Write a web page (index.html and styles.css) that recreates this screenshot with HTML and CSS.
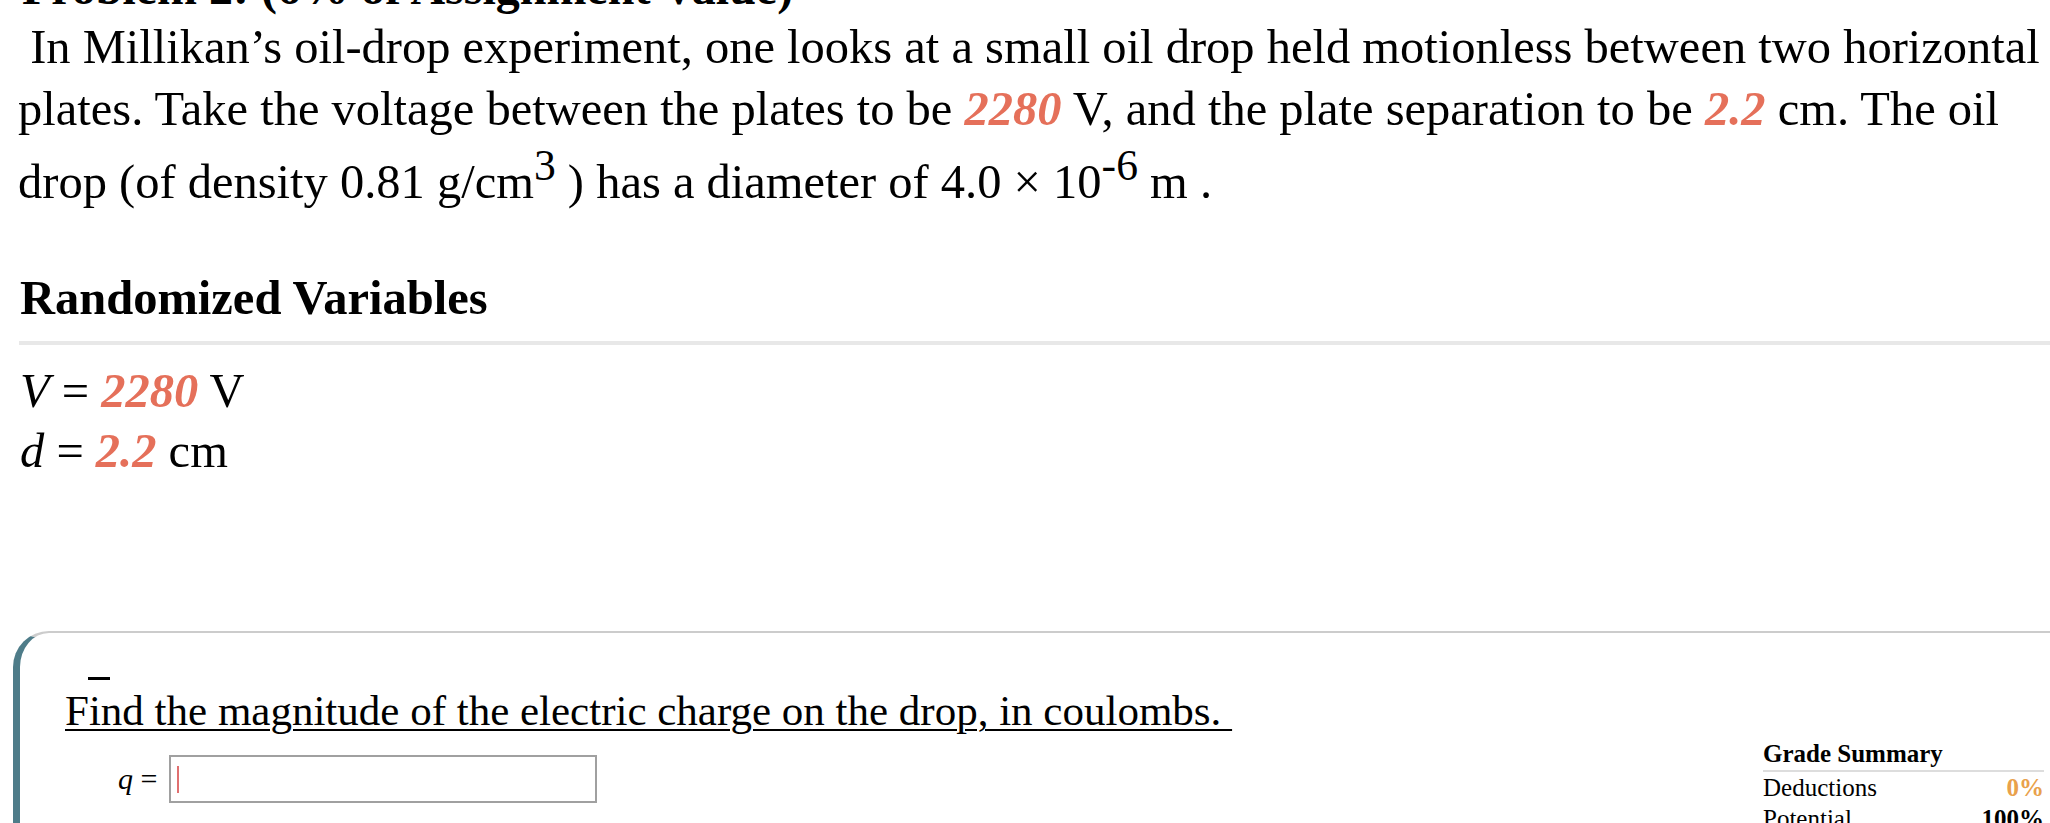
FILE: index.html
```html
<!DOCTYPE html>
<html>
<head>
<meta charset="utf-8">
<link rel="stylesheet" href="styles.css">
</head>
<body>
<div class="page">
  <h1 class="title">Problem 2: (6% of Assignment Value)</h1>
  <p class="statement">&nbsp;In Millikan’s oil-drop experiment, one looks at a small oil drop held motionless between two horizontal plates. Take the voltage between the plates to be <b class="rv">2280</b> V, and the plate separation to be <b class="rv">2.2</b> cm. The oil drop (of density 0.81 g/cm<sup>3</sup> ) has a diameter of 4.0 × 10<sup>-6</sup> m .</p>

  <h2 class="section-title">Randomized Variables</h2>
  <div class="rule"></div>
  <div class="vars">
    <div><i>V</i> = <b class="rv">2280</b> V</div>
    <div><i>d</i> = <b class="rv">2.2</b> cm</div>
  </div>

  <div class="card">
    <div class="dash"></div>
    <div class="question"><span class="qtext">Find the magnitude of the electric charge on the drop, in coulombs.&nbsp;</span></div>
    <div class="answer-row">
      <div class="answer">
        <span class="label"><i>q</i> = </span>
        <div class="input"><span class="caret"></span></div>
      </div>
      <div class="grade">
        <div class="grade-head">Grade Summary</div>
        <div class="grade-row"><span>Deductions</span><b class="ded">0%</b></div>
        <div class="grade-row"><span>Potential</span><b>100%</b></div>
      </div>
    </div>
  </div>
</div>
</body>
</html>
```

FILE: styles.css
```css
html, body {
  margin: 0;
  padding: 0;
  overflow: hidden;
  background: #fff;
}

body {
  font-family: "Liberation Serif", "Times New Roman", serif;
  color: #000;
}

.page {
  padding-left: 18px;
}

.title {
  margin: -40px 0 0 0;
  padding-left: 4px;
  font-size: 48px;
  line-height: 56px;
  font-weight: bold;
  white-space: nowrap;
}

.statement {
  margin: 0;
  font-size: 48.5px;
  line-height: 62px;
}

.statement sup {
  font-size: 0.9em;
  line-height: normal;
  vertical-align: 18px;
}

.rv {
  color: #e5705a;
  font-style: italic;
  font-weight: bold;
}

.section-title {
  margin: 55px 0 0 0;
  padding-left: 2px;
  font-size: 48.5px;
  line-height: 60px;
  font-weight: bold;
}

.rule {
  height: 4px;
  background: #e8e8e8;
  margin: 13px 0 0 1px;
}

.vars {
  margin-top: 16px;
  font-size: 48.5px;
  line-height: 60px;
  padding-left: 2px;
}

.card {
  margin: 150px 0 0 -5px;
  border-left: 7px solid #4e7c89;
  border-top: 2px solid #cccccc;
  border-top-left-radius: 36px;
  padding: 44px 6px 0 45px;
  min-height: 320px;
}

.dash {
  width: 22px;
  height: 3px;
  background: #000;
  margin-left: 23px;
}

.question {
  margin-top: 6px;
  font-size: 43px;
  line-height: 50px;
}

.qtext {
  text-decoration: underline;
  text-decoration-thickness: 2px;
  text-underline-offset: 4px;
}

.answer-row {
  display: flex;
  justify-content: space-between;
  align-items: flex-start;
  margin-top: 4px;
}

.answer {
  display: flex;
  align-items: center;
  margin-top: 15px;
  margin-left: 53px;
}

.label {
  font-size: 30px;
  margin-right: 12px;
}

.input {
  width: 418px;
  height: 44px;
  border: 2px solid #a0a0a0;
  display: flex;
  align-items: center;
  padding-left: 6px;
  box-sizing: content-box;
}

.caret {
  width: 2px;
  height: 27px;
  background: #e07070;
}

.grade {
  width: 281px;
  font-size: 25px;
}

.grade-head {
  font-weight: bold;
  line-height: 28px;
  padding-bottom: 2px;
  border-bottom: 2px solid #dddddd;
}

.grade-row {
  display: flex;
  justify-content: space-between;
  line-height: 31px;
}

.ded {
  color: #e9a14b;
}
```
